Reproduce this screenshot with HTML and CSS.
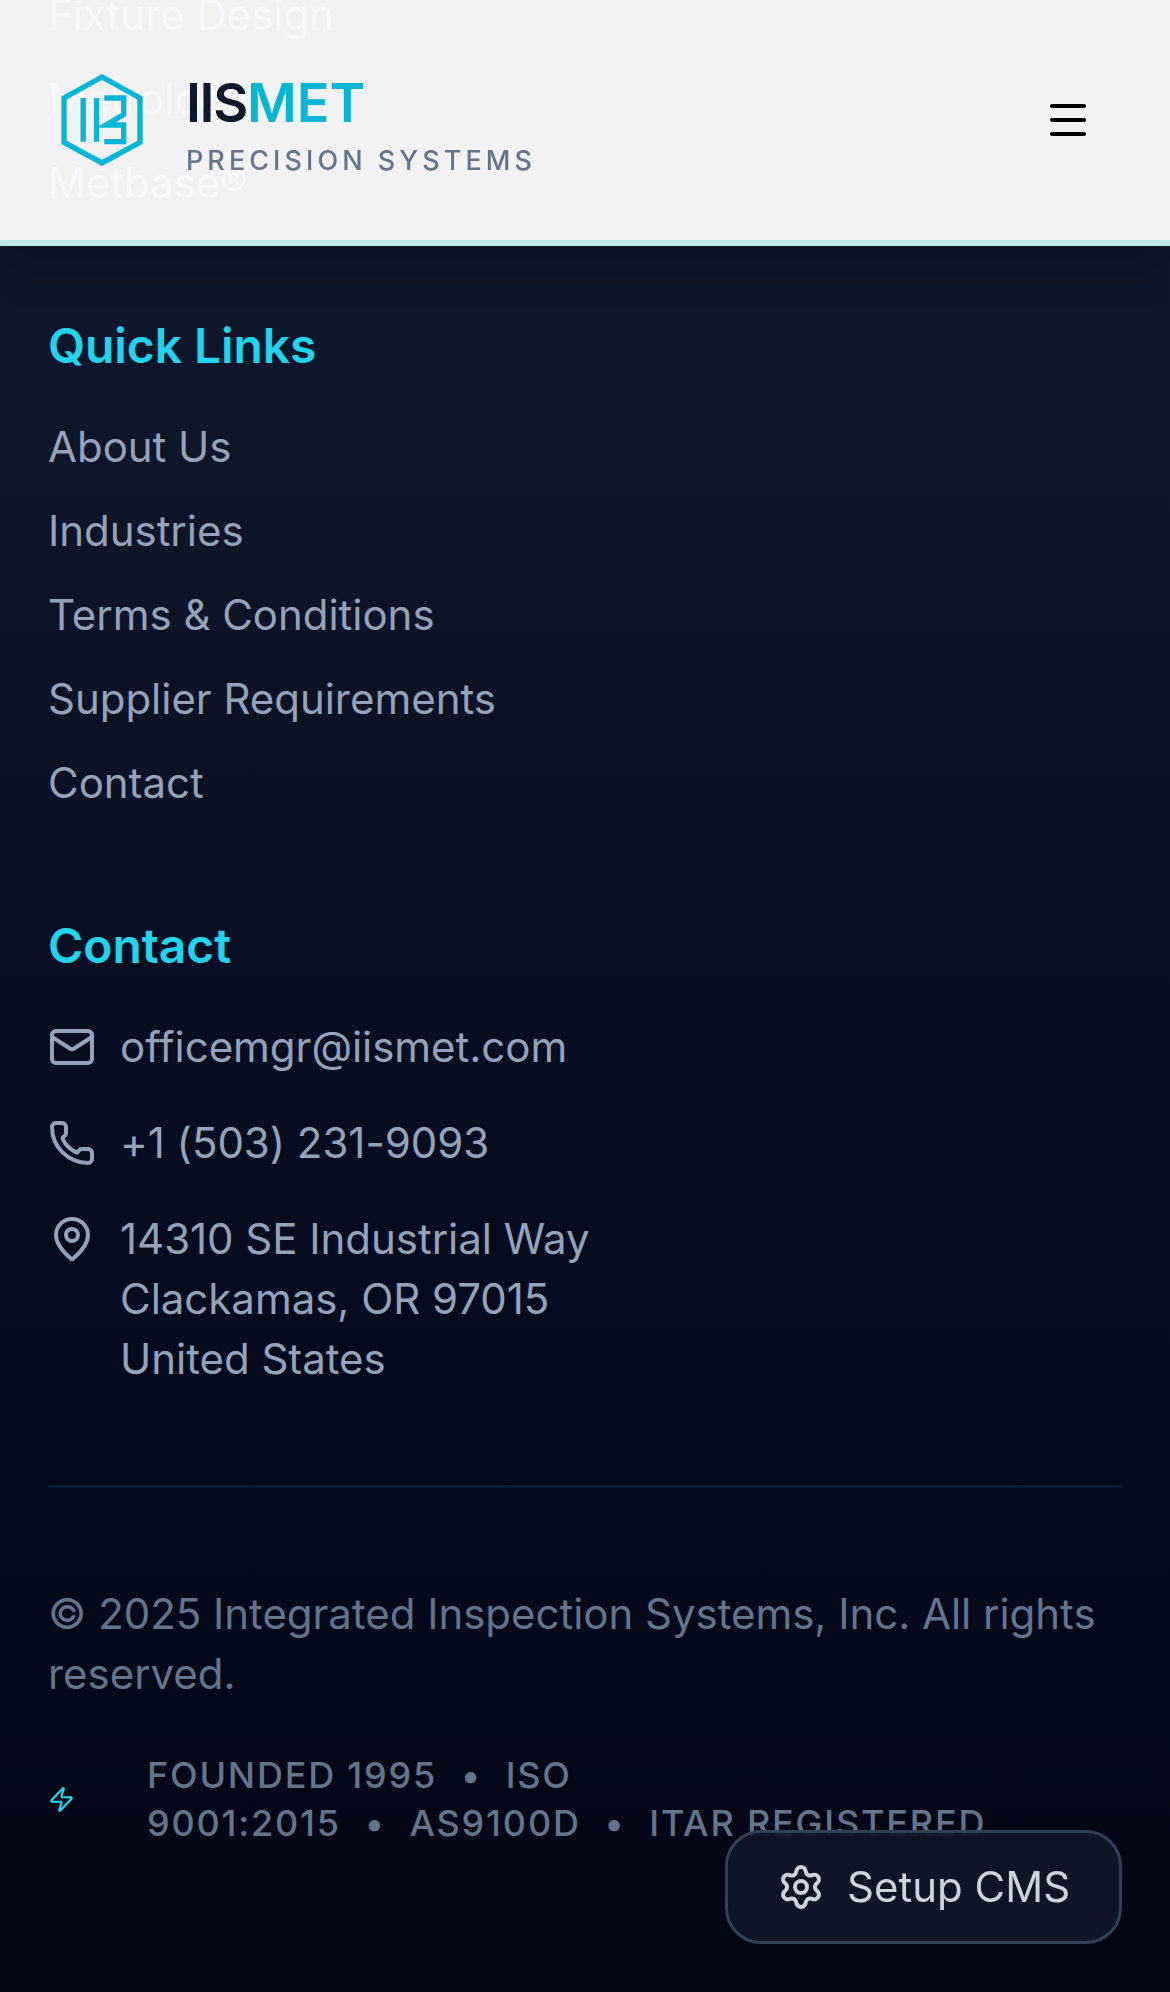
FILE: index.html
```html
<!DOCTYPE html>
<html lang="en">
<head>
<meta charset="utf-8">
<title>IISMET Precision Systems</title>
<link rel="stylesheet" href="styles.css">
</head>
<body>
<header class="header">
  <a class="brand">
    <svg class="brand-mark" viewBox="48 66 108 108" fill="none" stroke="currentColor" stroke-width="5.4">
      <path d="M102 77 140 98v44.500L102 163 64 142.500V98Z"/>
      <path d="M83.200 98v43.700M96.600 98v43.700"/>
      <path d="M104.300 98h19.400v16.500L106 125h17.700v16.600h-19.400"/>
    </svg>
    <span class="brand-text">
      <span class="brand-name">IIS<span class="accent">MET</span></span>
      <span class="brand-sub">PRECISION SYSTEMS</span>
    </span>
  </a>
  <svg class="icon menu" viewBox="0 0 24 24"><path d="M4 5h16M4 12h16M4 19h16"/></svg>
</header>

<footer class="footer">
  <ul class="links services">
    <li>Fixture Design</li>
    <li>Metrology</li>
    <li>Metbase®</li>
  </ul>
  <section class="group">
    <h3>Quick Links</h3>
    <ul class="links">
      <li>About Us</li>
      <li>Industries</li>
      <li>Terms &amp; Conditions</li>
      <li>Supplier Requirements</li>
      <li>Contact</li>
    </ul>
  </section>
  <section class="group">
    <h3>Contact</h3>
    <ul class="contacts">
      <li>
        <svg class="icon" viewBox="0 0 24 24"><path d="m22 7-8.991 5.727a2 2 0 0 1-2.009 0L2 7"/><rect x="2" y="4" width="20" height="16" rx="2"/></svg>
        <span>officemgr@iismet.com</span>
      </li>
      <li>
        <svg class="icon" viewBox="0 0 24 24"><path d="M13.832 16.568a1 1 0 0 0 1.213-.303l.355-.465A2 2 0 0 1 17 15h3a2 2 0 0 1 2 2v3a2 2 0 0 1-2 2A18 18 0 0 1 2 4a2 2 0 0 1 2-2h3a2 2 0 0 1 2 2v3a2 2 0 0 1-.8 1.600l-.468.351a1 1 0 0 0-.292 1.233 14 14 0 0 0 6.392 6.384"/></svg>
        <span>+1 (503) 231-9093</span>
      </li>
      <li>
        <svg class="icon" viewBox="0 0 24 24"><path d="M20 10c0 4.993-5.539 10.193-7.399 11.799a1 1 0 0 1-1.202 0C9.539 20.193 4 14.993 4 10a8 8 0 0 1 16 0"/><circle cx="12" cy="10" r="3"/></svg>
        <span>14310 SE Industrial Way<br>Clackamas, OR 97015<br>United States</span>
      </li>
    </ul>
  </section>
  <div class="legal">
    <p class="copyright">© 2025 Integrated Inspection Systems, Inc. All rights reserved.</p>
    <div class="certs">
      <svg class="icon bolt" viewBox="0 0 24 24"><path d="M4 14a1 1 0 0 1-.78-1.630l9.900-10.200a.5.5 0 0 1 .86.46l-1.920 6.020A1 1 0 0 0 13 10h7a1 1 0 0 1 .78 1.630l-9.900 10.200a.5.5 0 0 1-.86-.46l1.920-6.020A1 1 0 0 0 11 14z"/></svg>
      <span>FOUNDED 1995&nbsp;&nbsp;<span class="dot">•</span>&nbsp;&nbsp;ISO 9001:2015&nbsp;&nbsp;<span class="dot">•</span>&nbsp;&nbsp;AS9100D&nbsp;&nbsp;<span class="dot">•</span>&nbsp;&nbsp;ITAR REGISTERED</span>
    </div>
  </div>
</footer>

<button class="cms">
  <svg class="icon" viewBox="0 0 24 24"><path d="M9.671 4.136a2.340 2.340 0 0 1 4.659 0 2.340 2.340 0 0 0 3.319 1.915 2.340 2.340 0 0 1 2.330 4.033 2.340 2.340 0 0 0 0 3.831 2.340 2.340 0 0 1-2.330 4.033 2.340 2.340 0 0 0-3.319 1.915 2.340 2.340 0 0 1-4.659 0 2.340 2.340 0 0 0-3.320-1.915 2.340 2.340 0 0 1-2.330-4.033 2.340 2.340 0 0 0 0-3.831A2.340 2.340 0 0 1 6.350 6.051a2.340 2.340 0 0 0 3.319-1.915"/><circle cx="12" cy="12" r="3"/></svg>
  <span>Setup CMS</span>
</button>
</body>
</html>
```
FILE: styles.css
```css
* {
  box-sizing: border-box;
  margin: 0;
  padding: 0;
}

body {
  height: 1992px;
  overflow: hidden;
  background: #020617;
  font-family: Inter, "Liberation Sans", sans-serif;
  font-size: 42px;
  line-height: 60px;
  letter-spacing: -0.03px;
}

ul {
  list-style: none;
}

.icon {
  flex: none;
  width: 48px;
  height: 48px;
  fill: none;
  stroke: currentColor;
  stroke-width: 2;
  stroke-linecap: round;
  stroke-linejoin: round;
}

.header {
  position: fixed;
  top: 0;
  left: 0;
  z-index: 2;
  display: flex;
  align-items: center;
  justify-content: space-between;
  width: 100%;
  height: 246px;
  padding: 0 78px 0 48px;
  border-bottom: 6px solid rgba(6, 182, 212, 0.2);
  background: rgba(255, 254, 254, 0.95);
  box-shadow: 0 12px 48px rgba(0, 0, 0, 0.2);
}

.brand {
  display: flex;
  align-items: center;
  gap: 30px;
}

.brand-mark {
  width: 108px;
  height: 108px;
  color: #06b6d4;
}

.brand-text {
  display: flex;
  flex-direction: column;
  padding-top: 21px;
}

.brand-name {
  color: #0f172a;
  font-size: 54px;
  font-weight: 600;
  line-height: 60px;
  letter-spacing: -0.025em;
}

.accent {
  color: #06b6d4;
  letter-spacing: 0;
}

.brand-sub {
  color: #64748b;
  font-size: 27px;
  font-weight: 500;
  line-height: 56px;
  letter-spacing: 0.15em;
}

.menu {
  color: #000;
}

.footer {
  height: 1992px;
  padding: 0 48px;
  overflow: hidden;
  background: linear-gradient(#0f172a 0, #0e1629 450px, #0a1023 900px, #040a1e 1460px, #020515 1992px);
  color: #94a3b8;
}

.links,
.contacts {
  display: flex;
  flex-direction: column;
  gap: 24px;
}

.contacts {
  gap: 36px;
}

.services {
  margin-top: -15px;
}

.group {
  margin-top: 96px;
}

.group h3 {
  margin-bottom: 35px;
  padding-top: 1px;
  color: #22d3ee;
  font-size: 48px;
  font-weight: 600;
  line-height: 72px;
  letter-spacing: -0.08px;
}

.contacts li {
  display: flex;
  gap: 24px;
}

.contacts .icon {
  margin-top: 6px;
}

.legal {
  display: flex;
  flex-direction: column;
  gap: 47px;
  margin-top: 96px;
  padding-top: 96px;
  border-top: 3px solid rgba(6, 182, 212, 0.12);
  color: #64748b;
}

.certs {
  display: flex;
  align-items: center;
  gap: 72px;
  font-size: 36px;
  font-weight: 500;
  line-height: 48px;
  letter-spacing: 0.05em;
}

.dot {
  margin: 0 1px;
}

.bolt {
  width: 27px;
  height: 27px;
  color: #22d3ee;
}

.cms {
  position: fixed;
  right: 48px;
  bottom: 48px;
  z-index: 3;
  display: flex;
  align-items: center;
  gap: 22px;
  width: 397px;
  height: 114px;
  padding: 0 0 0 49px;
  border: 3px solid #334155;
  border-radius: 36px;
  background: rgba(15, 22, 39, 0.95);
  color: #cbd5e1;
  font: inherit;
}
```
